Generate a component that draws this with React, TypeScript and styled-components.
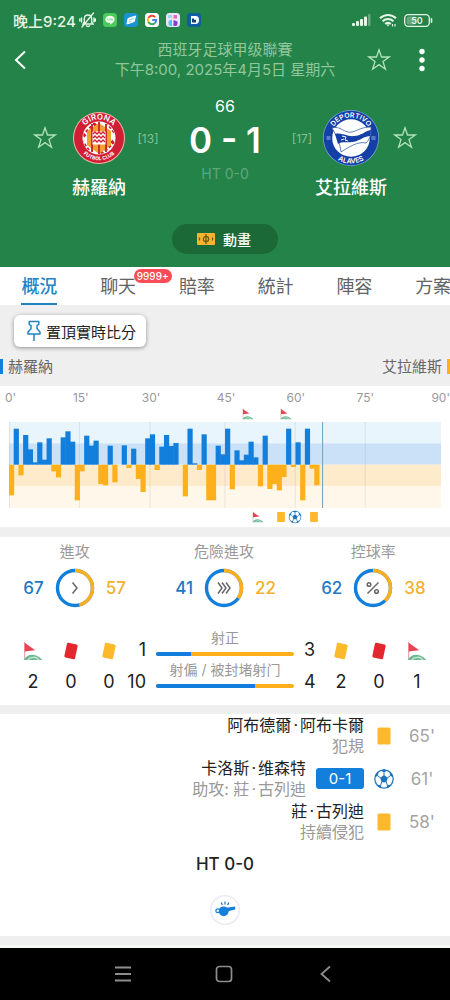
import React from "react";
import styled, { createGlobalStyle } from "styled-components";

const blue = "#127fdc";
const amber = "#fdb01c";

const GlobalStyle = createGlobalStyle`
  *, *::before, *::after { box-sizing: border-box; }
  body {
    margin: 0;
    background: #efefef;
    color: #222;
    font-family: Inter, "Noto Sans CJK TC", "Noto Sans CJK SC", sans-serif;
    font-size: 15px;
    overflow-x: hidden;
  }
  button { font: inherit; color: inherit; border: 0; padding: 0; margin: 0; background: none; cursor: pointer; }
  h1, h2, p, ul, ol { margin: 0; padding: 0; font-weight: 400; list-style: none; }
  svg { display: block; flex: none; }
`;

const Page = styled.div`
  display: flex;
  flex-direction: column;
  min-height: 100vh;
  overflow: hidden;
`;

const Hero = styled.header`
  background: #238349;
  color: #fff;
  padding-bottom: 13px;
`;

const StatusBar = styled.div`
  display: flex;
  align-items: center;
  gap: 7px;
  height: 40px;
  padding: 0 17px 0 13px;
  font-weight: 500;
  color: #e6f5e6;
`;

const StatusTime = styled.span`
  margin-right: -4px;
`;

const Spacer = styled.span`
  flex: 1;
`;

const AppBar = styled.div`
  display: grid;
  grid-template-columns: 92px 1fr 92px;
  align-items: center;
  height: 40px;
`;

const BackButton = styled.button`
  padding-left: 13px;
  justify-self: start;
`;

const BarActions = styled.div`
  display: flex;
  gap: 23px;
  padding-left: 9px;
`;

const League = styled.div`
  text-align: center;
  line-height: 20px;
  color: #91c79d;
  white-space: nowrap;
  display: flex;
  flex-direction: column;
  align-items: center;
`;

const LeagueName = styled.h1`
  font-size: 15px;
`;

const Matchup = styled.section`
  display: grid;
  grid-template-columns: 34px 74px 24px 1fr 24px 74px 34px;
  padding: 16px 28px 0;
`;

const SideCell = styled.div`
  display: flex;
  align-items: center;
  justify-content: center;
  height: 56px;
  margin-top: 14px;
  font-size: 12px;
  color: #82c093;
`;

const Team = styled.div`
  display: flex;
  flex-direction: column;
  align-items: center;
  gap: 10px;
  margin-top: 14px;
`;

const TeamName = styled.h2`
  font-size: 18px;
  font-weight: 500;
  line-height: 24px;
  white-space: nowrap;
`;

const ScoreBox = styled.div`
  display: flex;
  flex-direction: column;
  align-items: center;
  white-space: nowrap;
`;

const Minute = styled.span`
  font-size: 16px;
  line-height: 20px;
`;

const Score = styled.strong`
  font-size: 35px;
  font-weight: 600;
  line-height: 48px;
`;

const HalfTime = styled.span`
  line-height: 20px;
  font-size: 14px;
  color: #62a67b;
`;

const AnimationButton = styled.button`
  display: flex;
  align-items: center;
  gap: 8px;
  height: 30px;
  margin: 24px auto 0;
  padding: 0 27px 0 25px;
  border-radius: 15px;
  background: #1b6937;
  font-size: 14px;
  font-weight: 500;
`;

const Tabs = styled.nav`
  display: flex;
  height: 38px;
  background: #fff;
`;

const Tab = styled.button<{ $active?: boolean }>`
  position: relative;
  flex: 0 0 17.5%;
  display: flex;
  justify-content: center;
  font-size: 18px;
  line-height: 40px;
  color: ${(p) => (p.$active ? "#2384c6" : "#636363")};
  font-weight: ${(p) => (p.$active ? 500 : 400)};
`;

const TabLabel = styled.span<{ $active?: boolean }>`
  height: 38px;
  white-space: nowrap;
  border-bottom: ${(p) => (p.$active ? "2px solid #1f82c6" : "0")};
`;

const TabBadge = styled.span`
  position: absolute;
  top: 2px;
  left: 55px;
  height: 14px;
  padding: 0 3px;
  border-radius: 7px;
  background: #f84d58;
  color: #fff;
  font-size: 10px;
  font-weight: 500;
  line-height: 14px;
`;

const Toolbar = styled.div`
  padding: 10px 14px;
`;

const PinButton = styled.button`
  display: flex;
  align-items: center;
  gap: 4px;
  height: 32px;
  padding: 0 10px 0 12px;
  border-radius: 6px;
  background: #fff;
  box-shadow: 0 1px 4px rgba(0, 0, 0, 0.4);
`;

const TeamsRow = styled.div`
  display: flex;
  justify-content: space-between;
  align-items: center;
  height: 19px;
  margin-bottom: 10px;
  color: #666;
`;

const TeamTag = styled.span<{ $color: string; $end?: boolean }>`
  display: flex;
  flex-direction: ${(p) => (p.$end ? "row-reverse" : "row")};
  align-items: center;
  gap: 5px;
  line-height: 19px;

  &::before {
    content: "";
    width: 3px;
    height: 15px;
    background: ${(p) => p.$color};
  }
`;

const Card = styled.section`
  background: #fff;
  margin-bottom: 10px;
`;

const ChartCard = styled(Card)`
  padding: 4px 0 1px;
`;

const TimeScale = styled.div`
  display: grid;
  grid-template-columns: 68fr 69fr 75fr 70fr 70fr 75fr 18fr;
  padding-left: 5px;
  font-size: 12px;
  line-height: 16px;
  color: #999;
`;

const Track = styled.div<{ $height: number }>`
  position: relative;
  height: ${(p) => p.$height}px;
  margin: 0 9px;
`;

const Marker = styled.span`
  position: absolute;
  top: 50%;
  transform: translate(-50%, -50%);
`;

const PressureChart = styled.svg`
  width: calc(100% - 18px);
  height: 86px;
  margin: 0 9px;
`;

const StatsCard = styled(Card)`
  padding: 5px 0 13px;
  margin-bottom: 9px;
`;

const Rings = styled.div`
  display: grid;
  grid-template-columns: repeat(3, 1fr);
  padding-right: 2px;
`;

const RingStat = styled.div`
  display: flex;
  flex-direction: column;
  align-items: center;
  gap: 6px;
`;

const RingTitle = styled.span`
  line-height: 20px;
  color: #999;
`;

const RingRow = styled.div`
  display: grid;
  grid-template-columns: 1fr 40px 1fr;
  gap: 11px;
  align-items: center;
  line-height: 24px;
  font-size: 17px;
  font-weight: 500;
`;

const Figure = styled.span<{ $color: string; $end?: boolean }>`
  color: ${(p) => p.$color};
  text-align: ${(p) => (p.$end ? "right" : "left")};
`;

const Shots = styled.div`
  display: grid;
  grid-template-columns: 114px 1fr 114px;
  padding: 20px 14px 0;
`;

const Tallies = styled.div`
  display: grid;
  grid-template-columns: repeat(3, 1fr);
  padding-top: 13px;
`;

const Tally = styled.div`
  display: flex;
  flex-direction: column;
  align-items: center;
  gap: 11px;
  font-size: 18px;
  line-height: 20px;
`;

const ShotRow = styled.div`
  display: grid;
  grid-template-columns: 18px 1fr 18px;
  gap: 10px;
  height: 32px;
  font-size: 18px;
  line-height: 20px;
`;

const ShotCount = styled.span<{ $end?: boolean }>`
  display: flex;
  justify-content: ${(p) => (p.$end ? "flex-end" : "flex-start")};
  padding-top: 12px;
`;

const ShotMeter = styled.div`
  font-size: 14px;
  color: #999;
  text-align: center;
  white-space: nowrap;
`;

const Meter = styled.div`
  display: flex;
  height: 4px;
  margin-top: 4px;
  border-radius: 2px;
  overflow: hidden;
  background: ${amber};
`;

const MeterFill = styled.span`
  background: ${blue};
`;

const EventsCard = styled(Card)`
  margin-bottom: 9px;
  padding-bottom: 10px;
`;

const EventRow = styled.li`
  display: grid;
  grid-template-columns: 1fr 40px 36px;
  align-items: center;
  height: 43px;
  padding-right: 10px;
`;

const EventMain = styled.div`
  display: flex;
  justify-content: flex-end;
  align-items: center;
  gap: 10px;
`;

const EventText = styled.div`
  text-align: right;
  font-size: 16px;
  line-height: 21px;
`;

const Muted = styled.p`
  color: #999;
`;

const NameDot = styled.span`
  padding: 0 2px;
`;

const GoalScore = styled.span`
  width: 48px;
  height: 21px;
  border-radius: 3px;
  background: ${blue};
  color: #fff;
  font-size: 15px;
  line-height: 21px;
  text-align: center;
`;

const EventIcon = styled.span`
  display: flex;
  justify-content: center;
`;

const EventMinute = styled.span`
  font-size: 17px;
  color: #a3a3a3;
  text-align: center;
`;

const HalfTimeLine = styled.p`
  font-size: 17px;
  font-weight: 500;
  line-height: 24px;
  padding: 9px 0 18px;
  text-align: center;
`;

const Whistle = styled.div`
  display: flex;
  justify-content: center;
`;

const SystemNav = styled.nav`
  display: flex;
  justify-content: center;
  align-items: center;
  gap: 77px;
  height: 55px;
  margin-top: auto;
  padding-right: 2px;
  background: #000;
  border-top: 3px solid #f7f9f7;
`;

const StarIcon = ({ size = 24 }: { size?: number }) => (
  <svg width={size} height={size} viewBox="0 0 24 24" fill="none" stroke="#b5e3ba" strokeWidth="1.3">
    <path d="M12 1.8 14.5 9h7.7l-6.2 4.6 2.4 7.6-6.4-4.6-6.4 4.6L8 13.600 1.800 9h7.700z" />
  </svg>
);

const BellOffIcon = () => (
  <svg width="17" height="16" viewBox="0 0 17 16" fill="none" stroke="#e6f5e6" strokeWidth="1.400" strokeLinecap="round">
    <path d="M4 12h10l-1.300-2V7c0-2.500-1.500-4-3.700-4S5.300 4.500 5.300 7v3zM7.500 13.800c.8.800 2.200.8 3 0M14.500 1 3 15M2.500 6v4M.8 7v2M15 6v4M16.400 7v2" />
  </svg>
);

const LineAppIcon = () => (
  <svg width="14" height="14" viewBox="0 0 14 14">
    <rect width="14" height="14" rx="3.500" fill="#4cc95c" />
    <path d="M7 2.800c2.800 0 4.700 1.600 4.700 3.700C11.700 8.600 9 10.500 7 11.700V10C4.200 10 2.300 8.600 2.300 6.500S4.200 2.800 7 2.800z" fill="#f2fff2" />
    <path d="M4.300 5.600v1.600h1M6.300 5.600v1.600M7.300 7.200V5.600l1 1.600V5.600M9.300 5.600v1.600h.8" stroke="#4cc95c" strokeWidth=".5" fill="none" />
  </svg>
);

const NewsAppIcon = () => (
  <svg width="14" height="14" viewBox="0 0 14 14">
    <rect width="14" height="14" rx="3.500" fill="#1a93d4" />
    <path d="M4 5.500 11.500 3 10.300 8.500 3 11z" fill="#fff" stroke="#fff" strokeLinejoin="round" />
    <path d="m5 7 4.800-1.600M4.700 9l2.500-.8" stroke="#6cbce4" strokeWidth=".8" />
  </svg>
);

const GoogleAppIcon = () => (
  <svg width="14" height="14" viewBox="0 0 14 14" fill="none" strokeWidth="1.900">
    <rect width="14" height="14" rx="3.500" fill="#fff" />
    <path d="M10.200 4.200A4.200 4.200 0 0 0 3.400 4.900" stroke="#ea4335" />
    <path d="M3.400 4.900a4.200 4.200 0 0 0 0 4.200" stroke="#fbbc05" />
    <path d="M3.400 9.100a4.200 4.200 0 0 0 6.300 1.100" stroke="#34a853" />
    <path d="M9.700 10.200A4.200 4.200 0 0 0 11.200 7H7.200" stroke="#4285f4" />
  </svg>
);

const GameAppIcon = () => (
  <svg width="14" height="14" viewBox="0 0 14 14">
    <rect width="14" height="14" rx="3.500" fill="#ece6fb" />
    <path d="M2 2h4v3H2z" fill="#9fd8f2" />
    <path d="M7.500 2h3.500v3.500H7.500z" fill="#e36bb4" />
    <path d="M2.500 8 6 6.500V13H4.500a2 2 0 0 1-2-2z" fill="#55c3ee" />
    <path d="m7.500 7 4 1.500V11a2 2 0 0 1-2 2h-2z" fill="#7d3fd8" />
  </svg>
);

const ScoreAppIcon = () => (
  <svg width="14" height="14" viewBox="0 0 14 14">
    <rect width="14" height="14" rx="3.500" fill="#0d5f9e" />
    <path d="M4 3h4.500C11 3 12 4.600 12 7s-1.300 4-3.500 4H4z" fill="#fff" />
    <path d="M5 5.500h2v1.300h2v2.700H5z" fill="#123f6d" />
  </svg>
);

const SignalIcon = () => (
  <svg width="20" height="12" viewBox="0 0 20 12" fill="#e6f5e6">
    <rect x="0" y="9" width="3" height="3" rx="1" />
    <rect x="4" y="7" width="3" height="5" rx="1" />
    <rect x="8" y="5" width="3" height="7" rx="1" />
    <rect x="12" y="2.500" width="3" height="9.500" rx="1" />
    <rect x="16" y="0" width="2.500" height="12" rx="1" opacity=".35" />
  </svg>
);

const WifiIcon = () => (
  <svg width="18" height="14" viewBox="0 0 18 14" fill="none" stroke="#e6f5e6" strokeWidth="2.200">
    <path d="M1 5.200c4.600-4.300 11.400-4.300 16 0M3.600 8.200c3.200-2.900 7.600-2.900 10.800 0M6.200 11c1.700-1.400 3.900-1.400 5.600 0" />
    <path d="M7.500 11.500 9 13.500l1.500-2z" fill="#e6f5e6" stroke="none" />
    <path d="M13.500 11v2.500M16 11v2.500" strokeWidth="1.200" />
  </svg>
);

const BatteryIcon = () => (
  <svg width="29" height="13" viewBox="0 0 29 13">
    <rect x=".7" y=".7" width="24.600" height="11.600" rx="3.500" fill="none" stroke="#e6f5e6" strokeWidth="1.300" />
    <rect x="2.500" y="2.500" width="10" height="8" rx="2" fill="#fff" opacity=".3" />
    <rect x="26.700" y="4" width="1.600" height="5" rx=".8" fill="#e6f5e6" />
    <text x="13" y="9.800" textAnchor="middle" fontSize="9" fontWeight="600" fill="#e6f5e6">50</text>
  </svg>
);

const GironaCrest = () => (
  <svg width="56" height="56" viewBox="0 0 56 56" role="img" aria-label="Girona">
    <defs>
      <path id="gironaTop" d="M9.500 28a18.500 18.500 0 0 1 37 0" />
      <path id="gironaBottom" d="M5.800 28a22.200 22.200 0 0 0 44.400 0" />
      <clipPath id="gironaDisc"><circle cx="28" cy="28" r="16" /></clipPath>
    </defs>
    <circle cx="28" cy="28" r="26" fill="#f3b3a8" />
    <circle cx="28" cy="28" r="25" fill="#d01f35" />
    <circle cx="28" cy="28" r="16.500" fill="#fff" />
    <g clipPath="url(#gironaDisc)">
      <path d="M12 26 26 12M30 44l14-14M44 22 36 12M20 45 11 32" stroke="#d01f35" strokeWidth="4" strokeDasharray="3 2" />
      <path d="m28 13 12 8v14l-12 9-12-9V21z" fill="#f3a232" />
      <path d="M28 12v32M21 14v28M35 14v28" stroke="#c9302c" strokeWidth="2" />
      <rect x="21.500" y="21.500" width="13" height="13" fill="#fff" />
      <path d="m22 24 2-2 2 2 2-2 2 2 2-2 2 2M22 28l2-2 2 2 2-2 2 2 2-2 2 2M22 32l2-2 2 2 2-2 2 2 2-2 2 2" fill="none" stroke="#d01f35" strokeWidth="1.300" />
    </g>
    <text fontSize="8" fontWeight="600" fill="#fff" textAnchor="middle">
      <textPath href="#gironaTop" startOffset="50%">GIRONA</textPath>
    </text>
    <text fontSize="5" fontWeight="700" fill="#fff" textAnchor="middle">
      <textPath href="#gironaBottom" startOffset="50%">FUTBOL CLUB</textPath>
    </text>
  </svg>
);

const AlavesCrest = () => (
  <svg width="56" height="56" viewBox="0 0 56 56" role="img" aria-label="Alaves">
    <defs>
      <path id="alavesTop" d="M7.500 28a20.500 20.500 0 0 1 41 0" />
      <path id="alavesBottom" d="M2.500 28a25.500 25.500 0 0 0 51 0" />
    </defs>
    <circle cx="28" cy="28" r="28" fill="#7fa8dc" />
    <circle cx="28" cy="28" r="27.300" fill="#1440a6" />
    <circle cx="28" cy="28" r="18.800" fill="#fff" />
    <path d="M9 18c8-3 13 6 20 4s10-5 19-5c0 8-1 12-5 16-8-2-17 4-25 9-1-8-4-16-9-24z" fill="#fff" stroke="#3d5fae" strokeWidth=".8" />
    <path d="M12 24c7-2 12 3 19 2 7 0 11-5 17-6l-1 6c-8 1-12 6-18 6-6 1-9-1-14 2z" fill="#1440a6" />
    <path d="m19 26 4 1-1 3 3 1M18 30l3-1" stroke="#fff" strokeWidth="1" fill="none" />
    <text fontSize="7" fontWeight="600" fill="#fff" textAnchor="middle">
      <textPath href="#alavesTop" startOffset="50%">DEPORTIVO</textPath>
    </text>
    <text fontSize="7" fontWeight="600" fill="#fff" textAnchor="middle">
      <textPath href="#alavesBottom" startOffset="50%">ALAVES</textPath>
    </text>
    <path d="M3.500 27h4M3.500 29h4M48.500 27h4M48.500 29h4" stroke="#9db7ea" strokeWidth="1" />
  </svg>
);

const PitchIcon = () => (
  <svg width="18" height="12" viewBox="0 0 18 12" fill="none" stroke="#6b5a12" strokeWidth="1.300">
    <rect width="18" height="12" rx="1" fill="#fbb22c" stroke="none" />
    <circle cx="9" cy="6" r="2.600" />
    <path d="M9 1v10M2.500 4.500v3M15.500 4.500v3" />
  </svg>
);

const PushPinIcon = () => (
  <svg width="16" height="22" viewBox="0 0 16 22" fill="none" stroke="#1e84c8" strokeWidth="1.500" strokeLinejoin="round">
    <path d="M3.200 1.500h9.600v2.800l-1.800 1.200v3.200l3 3.300v2H2v-2l3-3.300V5.500L3.200 4.300zM8 14v7" />
  </svg>
);

const CornerIcon = ({ size }: { size: number }) => (
  <svg width={size} height={size} viewBox="0 0 18 18">
    <path d="M1.500 1v15" stroke="#e9a0a4" strokeWidth="1" />
    <path d="M1.500 1.500 11 8.300 1.500 9.500z" fill="#e74455" />
    <path d="M.5 17c3-5.500 10.500-7 17 0z" fill="#6fba97" />
    <path d="M4.500 17c2-3 7-3.500 10 0" fill="none" stroke="#cfeadb" strokeWidth="1" />
  </svg>
);

const CardIcon = ({ color, tilt = false, small = false }: { color: string; tilt?: boolean; small?: boolean }) => (
  <svg width={small ? 12 : 20} height={small ? 12 : 20} viewBox="0 0 20 20">
    <rect
      x={tilt ? 4.5 : 3.5}
      y={tilt ? 2.5 : 1.5}
      width={tilt ? 11 : 13}
      height={tilt ? 15 : 17}
      rx="1.500"
      fill={color}
      transform={tilt ? "rotate(12 10 10)" : undefined}
    />
  </svg>
);

const BallIcon = ({ size }: { size: number }) => (
  <svg width={size} height={size} viewBox="0 0 20 20">
    <circle cx="10" cy="10" r="9.200" fill="#fff" stroke="#2b7cc0" strokeWidth="1.300" />
    <path d="m10 6 3.800 2.800-1.400 4.500H7.600L6.200 8.800zM6.500 1.300l3.500 2.300 3.500-2.300-3.500-.8zM.8 8.500l3-1.700.8-4L1.800 5.500zM19.200 8.500l-3-1.700-.8-4 2.800 2.700zM3 15.700l3.500.3 1.300 3.200L4.800 18zM17 15.700l-3.500.3-1.300 3.200 3-1.200z" fill="#1b73bd" />
    <path d="M10 3.300v3M3.600 6.600l2.900 2.300M16.400 6.600l-2.900 2.300M7.800 13l-1.200 3.200M12.200 13l1.200 3.200" stroke="#1b73bd" strokeWidth="1" />
  </svg>
);

const WhistleIcon = () => (
  <svg width="32" height="32" viewBox="0 0 32 32">
    <circle cx="16" cy="16" r="14.300" fill="#fff" stroke="#eceaf3" strokeWidth="1.600" />
    <circle cx="14.700" cy="17.300" r="4.900" fill="#1580da" />
    <path d="M10.500 14.500c1-1.500 2.500-1.600 3.700-.7h3l8.900-1.300.2 3-7.300 1.800-4 2z" fill="#1580da" />
    <circle cx="8.800" cy="16.800" r="1.900" fill="none" stroke="#1580da" strokeWidth="1.200" />
    <path d="m12.200 8.500 1.200 2.400M16 7.500v3M19.800 8.500l-1.200 2.400" stroke="#246fae" strokeWidth="1.200" />
  </svg>
);

const ringGlyphs: Record<string, React.ReactNode> = {
  attack: <path d="m17.500 14.500 4.500 5.500-4.500 5.500" />,
  danger: <path d="m14 14.500 4 5.500-4 5.500M18 14.500l4 5.500-4 5.500M22 14.500l4 5.500-4 5.500" />,
  possession: (
    <>
      <circle cx="16" cy="16.500" r="1.800" />
      <circle cx="23.500" cy="23.500" r="1.800" />
      <path d="m25.500 14.500-11 11" />
    </>
  ),
};

const Ring = ({ home, away, glyph }: { home: number; away: number; glyph: string }) => (
  <svg width="40" height="40" viewBox="0 0 40 40" fill="none">
    <circle cx="20" cy="20" r="17.500" stroke={blue} strokeWidth="3.400" />
    <circle
      cx="20"
      cy="20"
      r="17.500"
      stroke={amber}
      strokeWidth="3.400"
      pathLength={100}
      strokeDasharray={`${(away / (home + away)) * 100} 100`}
      transform="rotate(-90 20 20)"
    />
    <g stroke="#666" strokeWidth="1.500">{ringGlyphs[glyph]}</g>
  </svg>
);

const tabs = ["概況", "聊天", "賠率", "統計", "陣容", "方案"];
const scale = ["0'", "15'", "30'", "45'", "60'", "75'", "90'"];
const totalMinutes = 92;

/* Pressure per minute: positive for the home side, negative for the away side. */
const pressure = [
  -92, 108, -32, 89, 46, 7, 67, 15, 79, -20, -38, 82, 100, 69, -107, -20, 87, 57, 72, -58, -62, 57, -53, 0, 58, -10, 48,
  -43, -82, 79, 91, -16, 54, 89, 56, 65, 0, -95, 108, 4, -16, 91, -107, -107, 57, 31, 108, -74, 43, 13, 30, 69, 22, -65,
  87, -73, -58, -77, -37, 108, -7, 67, -107, 108, -12, -62,
];

type MarkerKind = "corner" | "yellow" | "goal";
const homeMarkers: { minute: number; kind: MarkerKind }[] = [
  { minute: 51, kind: "corner" },
  { minute: 59, kind: "corner" },
];
const awayMarkers: { minute: number; kind: MarkerKind }[] = [
  { minute: 53, kind: "corner" },
  { minute: 58, kind: "yellow" },
  { minute: 61, kind: "goal" },
  { minute: 65, kind: "yellow" },
];

const rings = [
  { title: "進攻", home: 67, away: 57, glyph: "attack" },
  { title: "危險進攻", home: 41, away: 22, glyph: "danger" },
  { title: "控球率", home: 62, away: 38, glyph: "possession" },
];

const shots = [
  { label: "射正", home: 1, away: 3 },
  { label: "射偏 / 被封堵射门", home: 10, away: 4 },
];

const events = [
  { name: "阿布德爾·阿布卡爾", note: "犯規", minute: "65'", score: "" },
  { name: "卡洛斯·维森特", note: "助攻: 莊·古列迪", minute: "61'", score: "0-1" },
  { name: "莊·古列迪", note: "持續侵犯", minute: "58'", score: "" },
];

/* Sets the interpunct of a transliterated name with a little air on both sides. */
const Dotted = ({ text }: { text: string }) => {
  const [first, last] = text.split("·");
  return (
    <>
      {first}
      {last && <NameDot>·</NameDot>}
      {last}
    </>
  );
};

const Markers = ({ items, height }: { items: typeof homeMarkers; height: number }) => (
  <Track $height={height}>
    {items.map((m) => (
      <Marker key={m.minute} style={{ left: `${(m.minute / totalMinutes) * 100}%` }}>
        {m.kind === "corner" && <CornerIcon size={12} />}
        {m.kind === "yellow" && <CardIcon color="#fdb92c" small />}
        {m.kind === "goal" && <BallIcon size={13} />}
      </Marker>
    ))}
  </Track>
);

const barWidth = 14.1;

const Pressure = () => (
  <PressureChart viewBox="0 0 1297 258" preserveAspectRatio="none" role="img" aria-label="進攻走勢">
    <rect width="1297" height="64" fill="#e9f5fc" />
    <rect y="64" width="1297" height="64" fill="#cbe1f7" />
    <rect y="128" width="1297" height="65" fill="#fdebcb" />
    <rect y="193" width="1297" height="65" fill="#fff7e9" />
    {[0, 210, 422, 647, 858, 1068].map((x) => (
      <rect key={x} x={x} width="3" height="258" fill="#8a9aa8" opacity=".2" />
    ))}
    {pressure.map((v, i) => (
      <rect
        key={i}
        x={i * barWidth}
        y={v > 0 ? 128 - v : 128}
        width={barWidth + 1.5}
        height={Math.abs(v)}
        fill={v > 0 ? blue : amber}
      />
    ))}
    <rect x="940" width="3" height="258" fill="#6ea0bd" />
  </PressureChart>
);

const TallyColumn = ({ icon, value }: { icon: React.ReactNode; value: number }) => (
  <Tally>
    {icon}
    <span>{value}</span>
  </Tally>
);

const corner = <CornerIcon size={20} />;
const red = <CardIcon color="#e2272f" tilt />;
const yellow = <CardIcon color="#fdb92c" tilt />;

export default function App() {
  return (
    <Page>
      <GlobalStyle />
      <Hero>
        <StatusBar>
          <StatusTime>晚上9:24</StatusTime>
          <BellOffIcon />
          <LineAppIcon />
          <NewsAppIcon />
          <GoogleAppIcon />
          <GameAppIcon />
          <ScoreAppIcon />
          <Spacer />
          <SignalIcon />
          <WifiIcon />
          <BatteryIcon />
        </StatusBar>
        <AppBar>
          <BackButton aria-label="返回">
            <svg width="14" height="20" viewBox="0 0 14 20" fill="none" stroke="#fff" strokeWidth="2">
              <path d="m12 1.500-9 8.500 9 8.500" />
            </svg>
          </BackButton>
          <League>
            <LeagueName>西班牙足球甲级聯賽</LeagueName>
            <p>下午8:00, 2025年4月5日 星期六</p>
          </League>
          <BarActions>
            <button aria-label="收藏比賽"><StarIcon /></button>
            <button aria-label="更多">
              <svg width="16" height="24" viewBox="0 0 16 24" fill="#fff">
                <circle cx="8" cy="3.500" r="2.700" />
                <circle cx="8" cy="12" r="2.700" />
                <circle cx="8" cy="20.500" r="2.700" />
              </svg>
            </button>
          </BarActions>
        </AppBar>
        <Matchup>
          <SideCell><button aria-label="收藏赫羅納"><StarIcon /></button></SideCell>
          <Team>
            <GironaCrest />
            <TeamName>赫羅納</TeamName>
          </Team>
          <SideCell>[13]</SideCell>
          <ScoreBox>
            <Minute>66</Minute>
            <Score>0 - 1</Score>
            <HalfTime>HT 0-0</HalfTime>
          </ScoreBox>
          <SideCell>[17]</SideCell>
          <Team>
            <AlavesCrest />
            <TeamName>艾拉維斯</TeamName>
          </Team>
          <SideCell><button aria-label="收藏艾拉維斯"><StarIcon /></button></SideCell>
        </Matchup>
        <AnimationButton><PitchIcon />動畫</AnimationButton>
      </Hero>

      <Tabs>
        {tabs.map((t, i) => (
          <Tab key={t} $active={i === 0}>
            <TabLabel $active={i === 0}>{t}</TabLabel>
            {i === 1 && <TabBadge>9999+</TabBadge>}
          </Tab>
        ))}
      </Tabs>

      <main>
        <Toolbar>
          <PinButton><PushPinIcon />置頂實時比分</PinButton>
        </Toolbar>
        <TeamsRow>
          <TeamTag $color={blue}>赫羅納</TeamTag>
          <TeamTag $color={amber} $end>艾拉維斯</TeamTag>
        </TeamsRow>

        <ChartCard>
          <TimeScale>{scale.map((s) => <span key={s}>{s}</span>)}</TimeScale>
          <Markers items={homeMarkers} height={16} />
          <Pressure />
          <Markers items={awayMarkers} height={18} />
        </ChartCard>

        <StatsCard>
          <Rings>
            {rings.map((r) => (
              <RingStat key={r.title}>
                <RingTitle>{r.title}</RingTitle>
                <RingRow>
                  <Figure $color="#2079c4" $end>{r.home}</Figure>
                  <Ring home={r.home} away={r.away} glyph={r.glyph} />
                  <Figure $color="#f2b02e">{r.away}</Figure>
                </RingRow>
              </RingStat>
            ))}
          </Rings>
          <Shots>
            <Tallies>
              <TallyColumn icon={corner} value={2} />
              <TallyColumn icon={red} value={0} />
              <TallyColumn icon={yellow} value={0} />
            </Tallies>
            <div>
              {shots.map((s) => (
                <ShotRow key={s.label}>
                  <ShotCount $end>{s.home}</ShotCount>
                  <ShotMeter>
                    {s.label}
                    <Meter>
                      <MeterFill style={{ width: `${(s.home / (s.home + s.away)) * 100}%` }} />
                    </Meter>
                  </ShotMeter>
                  <ShotCount>{s.away}</ShotCount>
                </ShotRow>
              ))}
            </div>
            <Tallies>
              <TallyColumn icon={yellow} value={2} />
              <TallyColumn icon={red} value={0} />
              <TallyColumn icon={corner} value={1} />
            </Tallies>
          </Shots>
        </StatsCard>

        <EventsCard>
          <ol>
            {events.map((e) => (
              <EventRow key={e.minute}>
                <EventMain>
                  <EventText>
                    <p><Dotted text={e.name} /></p>
                    <Muted><Dotted text={e.note} /></Muted>
                  </EventText>
                  {e.score && <GoalScore>{e.score}</GoalScore>}
                </EventMain>
                <EventIcon>{e.score ? <BallIcon size={20} /> : <CardIcon color="#fdb92c" />}</EventIcon>
                <EventMinute>{e.minute}</EventMinute>
              </EventRow>
            ))}
          </ol>
          <HalfTimeLine>HT 0-0</HalfTimeLine>
          <Whistle><WhistleIcon /></Whistle>
        </EventsCard>
      </main>

      <SystemNav>
        <button aria-label="選單">
          <svg width="24" height="18" viewBox="0 0 24 18" stroke="#8d8d8d" strokeWidth="1.800">
            <path d="M4 2.500h16M4 9h16M4 15.500h16" />
          </svg>
        </button>
        <button aria-label="主畫面">
          <svg width="24" height="18" viewBox="0 0 24 18" fill="none" stroke="#8d8d8d" strokeWidth="1.700">
            <rect x="4.500" y="1.500" width="15" height="15" rx="3" />
          </svg>
        </button>
        <button aria-label="上一頁">
          <svg width="24" height="18" viewBox="0 0 24 18" fill="none" stroke="#8d8d8d" strokeWidth="1.800">
            <path d="M17 1.500 8.500 9l8.500 7.500" />
          </svg>
        </button>
      </SystemNav>
    </Page>
  );
}
